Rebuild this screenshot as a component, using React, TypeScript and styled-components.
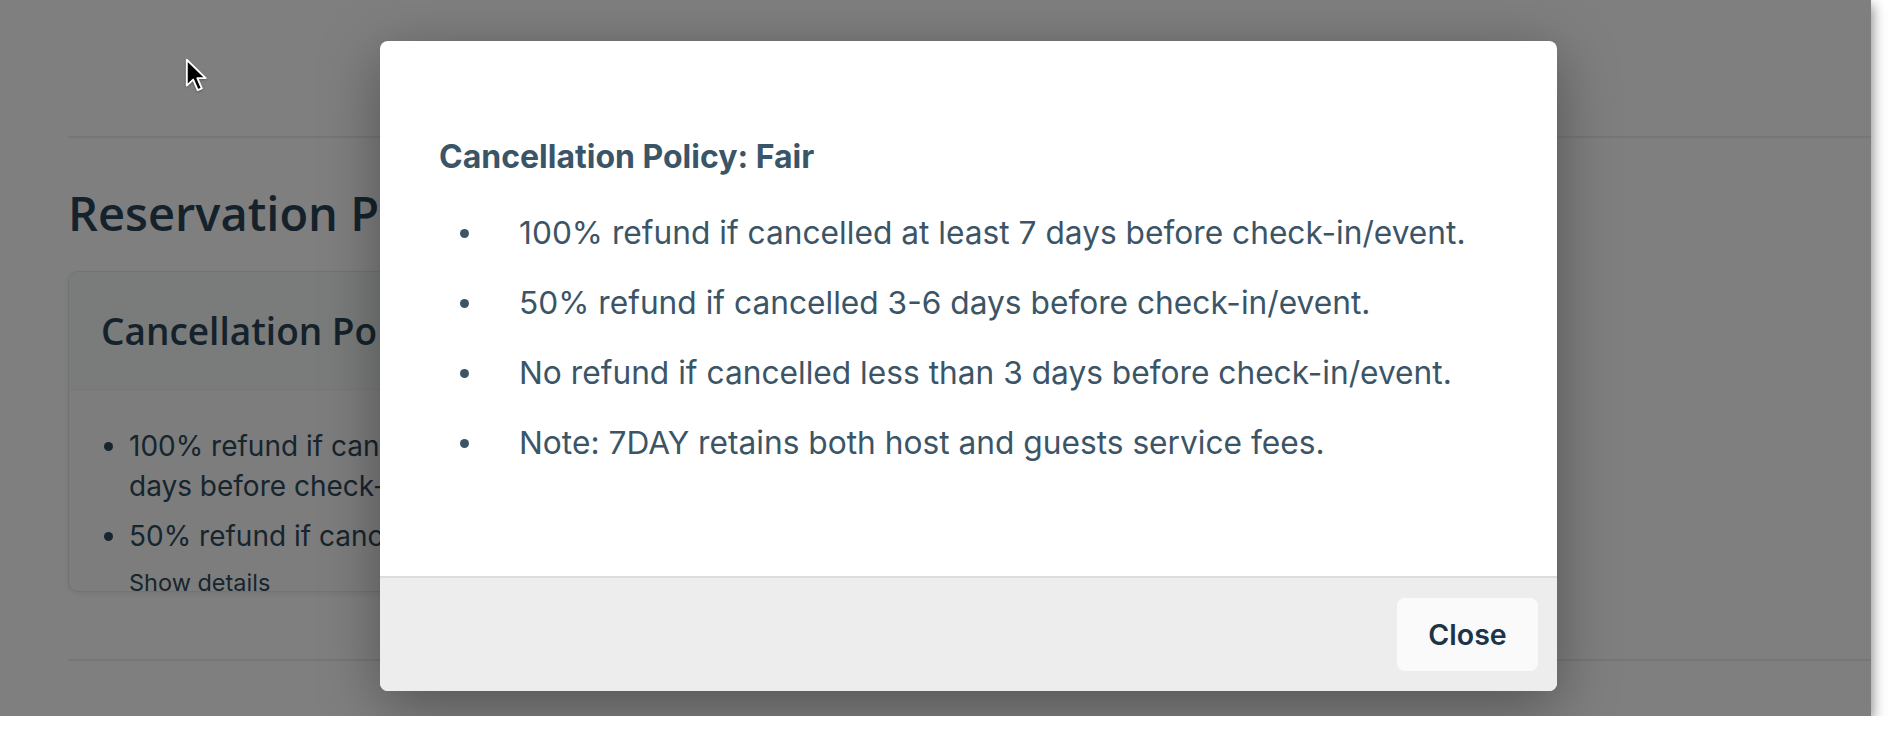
import { createGlobalStyle, styled } from 'styled-components';

const policyItems = [
    '100% refund if cancelled at least 7 days before check-in/event.',
    '50% refund if cancelled 3-6 days before check-in/event.',
    'No refund if cancelled less than 3 days before check-in/event.',
    'Note: 7DAY retains both host and guests service fees.',
];

const GlobalStyle = createGlobalStyle`
    html, body {
        margin: 0;
        padding: 0;
        background: #ffffff;
        font-family: Inter, "Noto Sans", sans-serif;
    }
    * {
        box-sizing: border-box;
    }
`;

const Cursor = () => (
    <CursorWrap>
        <svg width="24" height="36" viewBox="0 0 20 30">
            <path
                d="M1.5 1.5 L1.5 23 L6.8 18 L10.6 26.8 L14 25.3 L10.3 16.8 L17.2 16.8 Z"
                fill="#000"
                stroke="#fff"
                strokeWidth="1.6"
                strokeLinejoin="round"
            />
        </svg>
    </CursorWrap>
);

const App = () => {
    return (
        <>
            <GlobalStyle />
            <Window>
                <Page>
                    <Divider $top={136} />
                    <SectionTitle>Reservation Policies</SectionTitle>
                    <Card>
                        <CardHeader>Cancellation Policy: Fair</CardHeader>
                        <CardBody>
                            <ClampedList>
                                <CardList>
                                    <li>{policyItems[0]}</li>
                                    <li>{policyItems[1]}</li>
                                </CardList>
                            </ClampedList>
                            <ShowDetails>Show details</ShowDetails>
                        </CardBody>
                    </Card>
                    <Divider $top={67} />
                </Page>

                <Overlay>
                    <Modal>
                        <ModalBody>
                            <ModalTitle>Cancellation Policy: Fair</ModalTitle>
                            <PolicyList>
                                {policyItems.map((item) => (
                                    <PolicyItem key={item}>
                                        <Dot />
                                        <span>{item}</span>
                                    </PolicyItem>
                                ))}
                            </PolicyList>
                        </ModalBody>
                        <ModalFooter>
                            <CloseButton>Close</CloseButton>
                        </ModalFooter>
                    </Modal>
                </Overlay>

                <Cursor />
            </Window>
        </>
    );
};

export default App;


const Window = styled.div`
    position: relative;
    width: 1871px;
    height: 716px;
    overflow: hidden;
    background: #ffffff;
    box-shadow: 2px 5px 12px rgba(0, 0, 0, 0.45);
`;

const Page = styled.div`
    display: flex;
    flex-direction: column;
    padding-left: 68px;
`;

const Divider = styled.div<{ $top: number }>`
    margin-top: ${(p) => p.$top}px;
    height: 2px;
    width: 100%;
    background: #ececec;
`;

const SectionTitle = styled.h2`
    margin: 50px 0 0;
    font-family: "Open Sans", "DejaVu Sans", sans-serif;
    font-weight: 600;
    font-size: 47px;
    line-height: 50px;
    color: #2a4556;
    white-space: nowrap;
`;

const Card = styled.div`
    margin-top: 33px;
    width: 600px;
    height: 321px;
    display: flex;
    flex-direction: column;
    overflow: hidden;
    border: 1px solid #e4e6e6;
    border-radius: 10px;
    background: #fbfbfb;
    box-shadow: 0 2px 6px rgba(0, 0, 0, 0.08);
`;

const CardHeader = styled.div`
    height: 118px;
    flex-shrink: 0;
    display: flex;
    align-items: center;
    padding: 0 32px;
    background: #f4f6f6;
    border-bottom: 1px solid #eceeee;
    font-family: "Open Sans", "DejaVu Sans", sans-serif;
    font-weight: 600;
    font-size: 37px;
    color: #2a4556;
    white-space: nowrap;
`;

const CardBody = styled.div`
    padding: 36px 32px 0;
    color: #2f4a5b;
`;

const ClampedList = styled.div`
    max-height: 130px;
    overflow: hidden;
`;

const CardList = styled.ul`
    margin: 0;
    padding-left: 28px;
    font-size: 28px;
    line-height: 40px;

    li {
        margin-bottom: 10px;
    }
`;

const ShowDetails = styled.div`
    margin-top: 13px;
    padding-left: 28px;
    font-size: 23.5px;
    line-height: 28px;
`;

const Overlay = styled.div`
    position: absolute;
    inset: 0;
    display: flex;
    align-items: flex-start;
    padding: 41px 0 0 380px;
    background: rgba(0, 0, 0, 0.5);
`;

const Modal = styled.div`
    width: 1177px;
    height: 650px;
    display: flex;
    flex-direction: column;
    overflow: hidden;
    background: #ffffff;
    border-radius: 8px;
    box-shadow: 0 14px 60px rgba(0, 0, 0, 0.35);
`;

const ModalBody = styled.div`
    flex: 1;
    padding: 100px 59px 0;
    color: #3b5567;
`;

const ModalTitle = styled.h3`
    margin: 0;
    font-size: 32px;
    line-height: 32px;
    font-weight: 700;
    color: #3a5567;
`;

const PolicyList = styled.ul`
    margin: 40px 0 0;
    padding: 0;
    list-style: none;
    display: flex;
    flex-direction: column;
    gap: 30px;
`;

const PolicyItem = styled.li`
    display: flex;
    align-items: center;
    gap: 50px;
    font-size: 31.7px;
    line-height: 40px;
`;

const Dot = styled.span`
    width: 9px;
    height: 9px;
    margin-left: 21px;
    border-radius: 50%;
    background: #3b5567;
    flex-shrink: 0;
`;

const ModalFooter = styled.div`
    height: 115px;
    flex-shrink: 0;
    display: flex;
    justify-content: flex-end;
    align-items: center;
    padding-right: 19px;
    background: #ededed;
    border-top: 2px solid #dcdcdc;
`;

const CloseButton = styled.button`
    width: 141px;
    height: 73px;
    border: none;
    border-radius: 8px;
    background: #fafafa;
    font-family: Inter, "Noto Sans", sans-serif;
    font-size: 28.5px;
    font-weight: 600;
    color: #1b3447;
    cursor: pointer;
`;

const CursorWrap = styled.div`
    position: absolute;
    left: 185px;
    top: 58px;
    width: 24px;
    height: 36px;
    filter: drop-shadow(0 1px 1px rgba(0, 0, 0, 0.3));
`;
